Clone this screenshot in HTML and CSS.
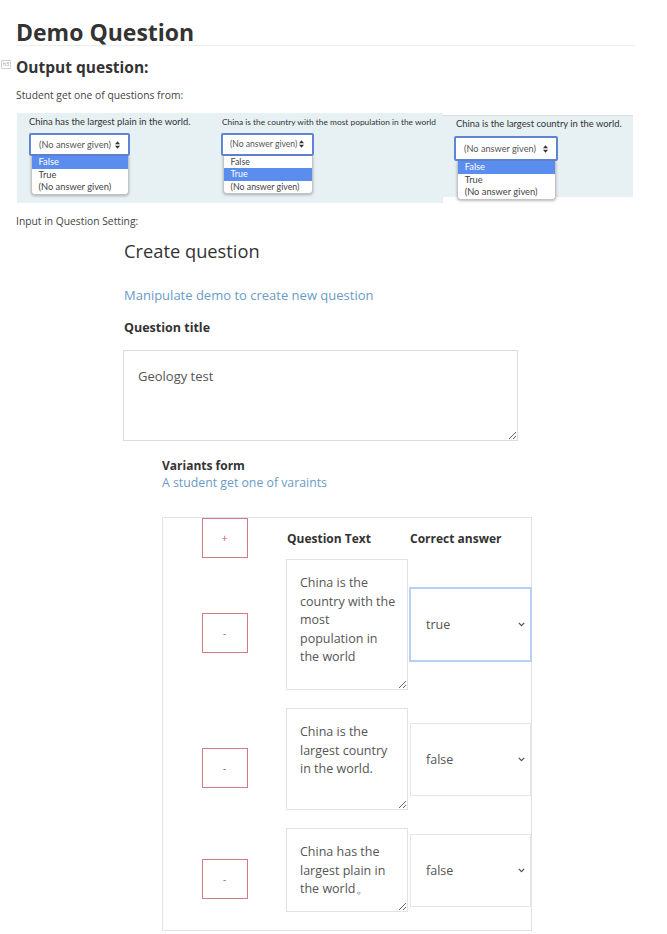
FILE: index.html
```html
<!DOCTYPE html>
<html lang="en">
<head>
<meta charset="utf-8">
<title>Demo Question</title>
<link rel="stylesheet" href="styles.css">
</head>
<body>
<main class="page">
  <h1 class="title">Demo Question</h1>
  <h2 class="subtitle"><span class="tag">h3</span>Output question:</h2>
  <p class="note">Student get one of questions from:</p>

  <div class="shots">
    <div class="shot shot-1">
      <div class="shot-label">China has the largest plain in the world.</div>
      <div class="fake-select">(No answer given)<svg class="updown" viewBox="0 0 5 8" width="5" height="8"><polygon points="0,3.3 2.5,0.3 5,3.3"/><polygon points="0,4.7 2.5,7.7 5,4.7"/></svg></div>
      <ul class="fake-list">
        <li class="on">False</li>
        <li>True</li>
        <li>(No answer given)</li>
      </ul>
    </div>
    <div class="shot shot-2">
      <div class="shot-label">China is the country with the most population in the world</div>
      <div class="fake-select">(No answer given)<svg class="updown" viewBox="0 0 5 8" width="5" height="8"><polygon points="0,3.3 2.5,0.3 5,3.3"/><polygon points="0,4.7 2.5,7.7 5,4.7"/></svg></div>
      <ul class="fake-list">
        <li>False</li>
        <li class="on">True</li>
        <li>(No answer given)</li>
      </ul>
    </div>
    <div class="shot shot-3">
      <div class="shot-label">China is the largest country in the world.</div>
      <div class="fake-select">(No answer given)<svg class="updown" viewBox="0 0 5 8" width="5" height="8"><polygon points="0,3.3 2.5,0.3 5,3.3"/><polygon points="0,4.7 2.5,7.7 5,4.7"/></svg></div>
      <ul class="fake-list">
        <li class="on">False</li>
        <li>True</li>
        <li>(No answer given)</li>
      </ul>
    </div>
  </div>

  <p class="note note-input">Input in Question Setting:</p>

  <section class="create">
    <h2 class="create-title">Create question</h2>
    <p class="create-link">Manipulate demo to create new question</p>
    <h3 class="field-label">Question title</h3>
    <textarea class="title-input">Geology test</textarea>

    <section class="variants">
      <h3 class="field-label variants-label">Variants form</h3>
      <p class="variants-hint">A student get one of varaints</p>

      <div class="vtable">
        <div class="vrow vhead">
          <button class="vbtn vbtn-add" type="button">+</button>
          <div class="vhead-cell">Question Text</div>
          <div class="vhead-cell vhead-answer">Correct answer</div>
        </div>

        <div class="vrow">
          <button class="vbtn" type="button">-</button>
          <textarea class="vtext vtext-1">China is the
country with the
most
population in
the world</textarea>
          <div class="vselect vselect-focus">true<svg class="chev" viewBox="0 0 7 5" width="7" height="5"><polyline points="0.8,0.9 3.5,3.6 6.2,0.9"/></svg></div>
        </div>

        <div class="vrow">
          <button class="vbtn" type="button">-</button>
          <textarea class="vtext vtext-2">China is the
largest country
in the world.</textarea>
          <div class="vselect">false<svg class="chev" viewBox="0 0 7 5" width="7" height="5"><polyline points="0.8,0.9 3.5,3.6 6.2,0.9"/></svg></div>
        </div>

        <div class="vrow">
          <button class="vbtn" type="button">-</button>
          <textarea class="vtext vtext-3">China has the
largest plain in
the world。</textarea>
          <div class="vselect">false<svg class="chev" viewBox="0 0 7 5" width="7" height="5"><polyline points="0.8,0.9 3.5,3.6 6.2,0.9"/></svg></div>
        </div>
      </div>
    </section>
  </section>
</main>
</body>
</html>
```

FILE: styles.css
```css
* {
  box-sizing: border-box;
}

body {
  margin: 0;
  background: #ffffff;
  font-family: "Open Sans", "Noto Sans", sans-serif;
  color: #333333;
}

.page {
  padding: 0 32px 0 16px;
}

.title {
  margin: 19px 0 0;
  font-size: 23px;
  line-height: 26px;
  font-weight: 700;
  color: #333333;
  border-bottom: 1px solid #eeeeee;
}

.subtitle {
  position: relative;
  margin: 10px 0 0;
  font-size: 15.5px;
  line-height: 22px;
  font-weight: 700;
  color: #333333;
}

.tag {
  position: absolute;
  left: -15px;
  top: 4px;
  width: 10px;
  height: 9px;
  border: 1px solid #cfcfcf;
  border-radius: 1px;
  font-size: 5.5px;
  line-height: 7px;
  font-weight: 400;
  text-align: center;
  color: #9a9a9a;
}

.note {
  margin: 10px 0 0;
  font-size: 10.3px;
  line-height: 15px;
  color: #444444;
}

.note-input {
  margin-top: 11px;
}

/* screenshot strip */
.shots {
  display: flex;
  align-items: flex-start;
  margin-top: 10px;
  padding-left: 1px;
}

.shot {
  background: #e7f0f3;
  font-family: Lato, "Liberation Sans", sans-serif;
  color: #333333;
}

.shot-1 {
  width: 194px;
  height: 90px;
  padding: 3px 0 0 12px;
}

.shot-2 {
  width: 232px;
  height: 90px;
  padding: 3px 0 0 10px;
}

.shot-3 {
  width: 190px;
  height: 82px;
  margin-top: 2px;
  border-top: 1px solid #d9dee1;
  padding: 2px 0 0 11px;
}

.shot-label {
  font-size: 9.4px;
  line-height: 12px;
  white-space: nowrap;
}

.shot-2 .shot-label {
  font-size: 8.4px;
  margin-left: 1px;
}

.shot-3 .shot-label {
  margin-left: 2px;
}

.fake-select {
  display: flex;
  align-items: center;
  justify-content: space-between;
  margin-top: 5px;
  width: 101px;
  height: 23px;
  padding: 0 8px 0 8px;
  background: #ffffff;
  border: 2px solid #5f84d3;
  border-radius: 2px;
  font-size: 9.2px;
  color: #555555;
  white-space: nowrap;
}

.shot-2 .fake-select {
  width: 93px;
  height: 22.5px;
  padding: 0 8px 0 7px;
  font-size: 8.6px;
}

.shot-3 .fake-select {
  width: 104px;
  height: 25px;
  margin-top: 6px;
}

.updown {
  flex: none;
  fill: #333333;
}

.fake-list {
  list-style: none;
  margin: 0 0 0 1.5px;
  padding: 0;
  width: 98px;
  background: #ffffff;
  border: 1px solid #c4c4c4;
  border-top: none;
  border-radius: 0 0 4px 4px;
  box-shadow: 0 1px 3px rgba(0, 0, 0, 0.28);
  font-size: 9.3px;
  line-height: 12.5px;
  color: #444444;
  overflow: hidden;
}

.fake-list li {
  padding-left: 7px;
  white-space: nowrap;
}

.fake-list li.on {
  background: #5b8def;
  color: #ffffff;
}

.shot-2 .fake-list {
  width: 90px;
  margin-left: 1.6px;
  font-size: 8.8px;
}

.shot-3 .fake-list {
  width: 99px;
  margin-left: 2.7px;
}

/* create question */
.create {
  margin-left: 108px;
}

.create-title {
  margin: 10px 0 0;
  font-size: 18.3px;
  line-height: 24px;
  font-weight: 400;
  color: #333333;
}

.create-link {
  margin: 23px 0 0;
  font-size: 13px;
  line-height: 18px;
  color: #6a9bc7;
}

.field-label {
  margin: 15px 0 0;
  font-size: 12.5px;
  line-height: 18px;
  font-weight: 700;
  color: #333333;
}

.title-input {
  display: block;
  margin: 13px 0 0 -1px;
  width: 395px;
  height: 91px;
  padding: 16px 14px;
  border: 1px solid #dcdcdc;
  border-radius: 0;
  font-family: "Open Sans", "Noto Sans", sans-serif;
  font-size: 13px;
  line-height: 19px;
  color: #555555;
  background: #ffffff;
  overflow: hidden;
}

.variants {
  margin-left: 38px;
}

.variants-label {
  margin-top: 16px;
  font-size: 12px;
  line-height: 17px;
}

.variants-hint {
  margin: 0;
  font-size: 12.3px;
  line-height: 17px;
  color: #6a9bc7;
}

.vtable {
  margin-top: 26px;
  width: 370px;
  padding-bottom: 18px;
  border: 1px solid #dfe2e8;
}

.vrow {
  display: grid;
  grid-template-columns: 123px 123px 122px;
  align-items: center;
  margin-top: 18px;
}

.vhead {
  margin-top: 0;
  margin-bottom: -17px;
}

.vbtn {
  justify-self: center;
  width: 46px;
  height: 40px;
  margin-top: 17px;
  padding: 0;
  background: #ffffff;
  border: 1px solid #d27a84;
  border-radius: 0;
  font-family: "Open Sans", "Noto Sans", sans-serif;
  font-size: 10px;
  color: #d2545c;
}

.vbtn-add {
  margin-top: 0;
}

.vhead-cell {
  padding-left: 1px;
  font-size: 12px;
  line-height: 17px;
  font-weight: 700;
  color: #333333;
}

.vtext {
  display: block;
  width: 122px;
  padding: 14px 6px 14px 13px;
  border: 1px solid #e2e2e2;
  border-radius: 0;
  font-family: "Open Sans", "Noto Sans", sans-serif;
  font-size: 12.5px;
  line-height: 18.5px;
  color: #555555;
  background: #ffffff;
  overflow: hidden;
  white-space: pre;
}

.vtext-1 {
  height: 131px;
}

.vtext-2 {
  height: 102px;
}

.vtext-3 {
  height: 84px;
}

.vselect {
  display: flex;
  align-items: center;
  justify-content: space-between;
  margin-left: 1px;
  width: 121px;
  height: 73px;
  padding: 0 5px 0 15px;
  border: 1px solid #e6e6e6;
  background: #ffffff;
  font-size: 12.5px;
  color: #555555;
}

.vselect-focus {
  border-color: #b9d0f6;
  box-shadow: 0 0 0 1px #b9d0f6;
}

.chev {
  flex: none;
  fill: none;
  stroke: #555555;
  stroke-width: 1.3;
}
```
